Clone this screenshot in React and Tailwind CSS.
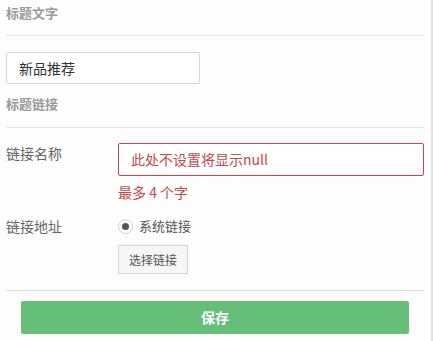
export default function App() {
  const font = { fontFamily: '"Noto Sans CJK SC", "Noto Sans", sans-serif' };

  return (
    <div className="w-[433px] h-[341px] bg-[#fdfdfd] flex" style={font}>
      <div className="w-[433px] h-full border-r-2 border-[#e2e2e2] pl-[6px] pr-[7px]">
        {/* 标题文字 */}
        <div className="text-[13px] leading-[26px] font-bold text-[#9a9a9a]">标题文字</div>
        <div className="mt-[9px] border-t border-[#e6e6e6]" />
        <div className="mt-[16px] w-[194px] h-[32px] border border-[#d6d6d6] rounded-[2px] bg-white flex items-center px-[12px] text-[14px] text-[#333]">
          新品推荐
        </div>

        {/* 标题链接 */}
        <div className="mt-[7px] text-[13px] leading-[26px] font-bold text-[#9a9a9a]">标题链接</div>
        <div className="mt-[10px] border-t border-[#e6e6e6]" />

        <div className="mt-[15px] flex">
          <div className="w-[112px] text-[14px] leading-[20px] text-[#666]">链接名称</div>
          <div className="flex-1">
            <div className="h-[33px] border border-[#c4494b] rounded-[2px] bg-white flex items-center px-[12px] text-[14px] text-[#c4494b]">
              此处不设置将显示null
            </div>
            <div className="mt-[6px] text-[14px] leading-[20px] text-[#c4494b] whitespace-pre">最多 4 个字</div>
          </div>
        </div>

        <div className="mt-[14px] flex">
          <div className="w-[112px] text-[14px] leading-[20px] text-[#666]">链接地址</div>
          <div className="flex-1">
            <div className="flex items-center h-[20px]">
              <span className="w-[15px] h-[15px] rounded-full border border-[#d0d0d0] bg-white flex items-center justify-center">
                <span className="w-[7px] h-[7px] rounded-full bg-[#555]" />
              </span>
              <span className="ml-[6px] text-[13px] text-[#555]">系统链接</span>
            </div>
            <div className="mt-[9px] w-[70px] h-[29px] border border-[#d4d4d4] bg-[#f7f7f7] flex items-center justify-center text-[12px] text-[#555]">
              选择链接
            </div>
          </div>
        </div>

        <div className="mt-[16px] border-t border-[#dedede]" />
        <div className="mt-[10px] mx-[15px] h-[33px] rounded-[2px] bg-[#66bf79] flex items-center justify-center text-[14px] font-bold text-white">
          保存
        </div>
      </div>
    </div>
  );
}
